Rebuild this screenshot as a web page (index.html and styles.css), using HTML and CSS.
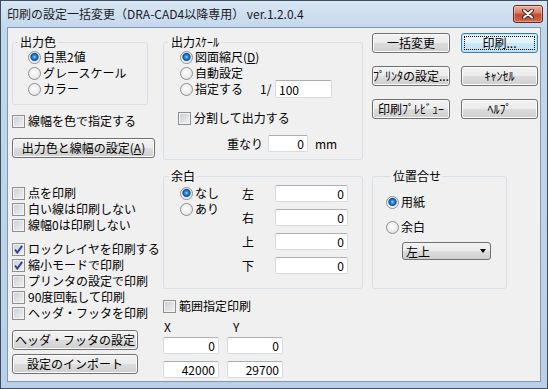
FILE: index.html
```html
<!DOCTYPE html>
<html>
<head>
    <title>印刷の設定一括変更</title>
    <link rel="stylesheet" href="styles.css">
</head>
<body>
<div class="window">
    <div class="titlebar">
        <span class="title">印刷の設定一括変更（DRA-CAD4以降専用） ver.1.2.0.4</span>
        <span class="close">
            <svg width="12" height="10" viewBox="0 0 12 10">
                <path d="M2 1.5 L10 8.5 M10 1.5 L2 8.5" stroke="#4a1710" stroke-width="4" stroke-linecap="round"/>
                <path d="M2 1.5 L10 8.5 M10 1.5 L2 8.5" stroke="#fff" stroke-width="2.2" stroke-linecap="round"/>
            </svg>
        </span>
    </div>
    <div class="client">
        <!-- left column -->
        <div class="col col-left">
            <fieldset class="group g-color">
                <legend>出力色</legend>
                <div class="opts">
                    <div class="opt"><span class="radio on"></span>白黒2値</div>
                    <div class="opt"><span class="radio"></span>グレースケール</div>
                    <div class="opt"><span class="radio"></span>カラー</div>
                </div>
            </fieldset>
            <div class="opt width-by-color"><span class="check"></span>線幅を色で指定する</div>
            <button class="btn btn-colorset">出力色と線幅の設定(<u>A</u>)</button>

            <div class="checks checks-1">
                <div class="opt"><span class="check"></span>点を印刷</div>
                <div class="opt"><span class="check"></span>白い線は印刷しない</div>
                <div class="opt"><span class="check"></span>線幅0は印刷しない</div>
            </div>
            <div class="checks checks-2">
                <div class="opt"><span class="check on"><svg width="11" height="11" viewBox="0 0 11 11"><path d="M2 5.5 L4.3 8.5 L9.2 1.8" fill="none" stroke="#2f4a92" stroke-width="2"/></svg></span>ロックレイヤを印刷する</div>
                <div class="opt"><span class="check on"><svg width="11" height="11" viewBox="0 0 11 11"><path d="M2 5.5 L4.3 8.5 L9.2 1.8" fill="none" stroke="#2f4a92" stroke-width="2"/></svg></span>縮小モードで印刷</div>
                <div class="opt"><span class="check"></span>プリンタの設定で印刷</div>
                <div class="opt"><span class="check"></span>90度回転して印刷</div>
                <div class="opt"><span class="check"></span>ヘッダ・フッタを印刷</div>
            </div>
            <button class="btn btn-header">ヘッダ・フッタの設定</button>
            <button class="btn btn-import">設定のインポート</button>
        </div>

        <!-- middle column -->
        <div class="col col-mid">
            <fieldset class="group g-scale">
                <legend>出力ｽｹｰﾙ</legend>
                <div class="opts">
                    <div class="opt"><span class="radio on"></span>図面縮尺(<u>D</u>)</div>
                    <div class="opt"><span class="radio"></span>自動設定</div>
                    <div class="opt">
                        <span class="radio"></span><span class="scale-label">指定する</span>
                        <span class="scale-of">1/</span>
                        <input class="field scale-val" value="100">
                    </div>
                </div>
                <div class="opt split"><span class="check"></span>分割して出力する</div>
                <div class="overlap">
                    <span class="overlap-label">重なり</span>
                    <input class="field num overlap-val" value="0">
                    <span class="unit">mm</span>
                </div>
            </fieldset>

            <fieldset class="group g-margin">
                <legend>余白</legend>
                <div class="margin-body">
                    <div class="margin-opts">
                        <div class="opt"><span class="radio on"></span>なし</div>
                        <div class="opt"><span class="radio"></span>あり</div>
                    </div>
                    <div class="margin-fields">
                        <div class="mrow"><span class="mlabel">左</span><input class="field num mval" value="0"></div>
                        <div class="mrow"><span class="mlabel">右</span><input class="field num mval" value="0"></div>
                        <div class="mrow"><span class="mlabel">上</span><input class="field num mval" value="0"></div>
                        <div class="mrow"><span class="mlabel">下</span><input class="field num mval" value="0"></div>
                    </div>
                </div>
            </fieldset>

            <div class="opt range"><span class="check"></span>範囲指定印刷</div>
            <div class="xy-labels"><span class="xy-x">X</span><span>Y</span></div>
            <div class="xy-row xy-row-1">
                <input class="field num xy" value="0">
                <input class="field num xy" value="0">
            </div>
            <div class="xy-row xy-row-2">
                <input class="field num xy" value="42000">
                <input class="field num xy" value="29700">
            </div>
        </div>

        <!-- right column -->
        <div class="col col-right">
            <div class="actions">
                <button class="btn">一括変更</button>
                <button class="btn btn-default">印刷...</button>
                <button class="btn">ﾌﾟﾘﾝﾀの設定...</button>
                <button class="btn">ｷｬﾝｾﾙ</button>
                <button class="btn">印刷ﾌﾟﾚﾋﾞｭｰ</button>
                <button class="btn">ﾍﾙﾌﾟ</button>
            </div>

            <fieldset class="group g-align">
                <legend>位置合せ</legend>
                <div class="opt align-paper"><span class="radio on"></span>用紙</div>
                <div class="opt align-margin"><span class="radio"></span>余白</div>
                <div class="combo"><span>左上</span><span class="arrow"></span></div>
            </fieldset>
        </div>
    </div>
</div>
</body>
</html>
```

FILE: styles.css
```css
* {
    box-sizing: border-box;
}

body {
    margin: 0;
    font-family: "Noto Sans CJK JP", sans-serif;
    font-size: 12px;
    color: #000;
}

.window {
    width: 548px;
    height: 389px;
    border: 1px solid #3e4e61;
    padding: 0 6px 6px;
    background: linear-gradient(#d9e6f4, #c3d7ec 27px, #bad0e8);
    display: flex;
    flex-direction: column;
}

.titlebar {
    height: 26px;
    margin: 0 -6px;
    padding: 0 4px 0 6px;
    display: flex;
    align-items: center;
    justify-content: space-between;
}

.title {
    line-height: 14px;
    color: #1b1b1b;
}

.close {
    width: 30px;
    height: 18px;
    border: 1px solid #6b2a1d;
    border-radius: 3px;
    background: linear-gradient(#eab0a0, #d77b63 45%, #c4472c 50%, #cf6a50);
    box-shadow: inset 0 0 0 1px rgba(255, 255, 255, 0.35);
    display: flex;
    align-items: center;
    justify-content: center;
}

.client {
    flex: 1;
    background: #f0f0f0;
    border: 1px solid #7d97b4;
    display: flex;
    padding-left: 4px;
}

.col {
    display: flex;
    flex-direction: column;
    align-items: flex-start;
}

.col-left {
    width: 143px;
    margin-right: 8px;
}

.col-mid {
    width: 200px;
    margin-right: 9px;
}

.col-right {
    width: 166px;
}

/* group boxes */
.group {
    margin: 0;
    padding: 0;
    border: 1px solid #d5dfe5;
    border-radius: 3px;
    min-width: 0;
}

.group legend {
    margin-left: 5px;
    padding: 0 2px;
    height: 14px;
    line-height: 14px;
}

/* radio / check rows */
.opt {
    display: flex;
    align-items: center;
    height: 16px;
    line-height: 16px;
    white-space: nowrap;
}

.radio {
    flex: none;
    width: 13px;
    height: 13px;
    margin-right: 2px;
    border: 1px solid #8e8f8f;
    border-radius: 50%;
    background: radial-gradient(circle at 45% 40%, #ffffff 0, #ececec 55%, #d4d4d4 100%);
}

.radio.on {
    background: radial-gradient(circle at 50% 45%, #9ee0ff 0, #2f92e6 1.5px, #0b4f9e 3.5px, #5b8fc6 4px, #e8e8e8 4.6px, #fafafa 6px);
}

.check {
    flex: none;
    width: 13px;
    height: 13px;
    margin-right: 3px;
    border: 1px solid #8e8f8f;
    background: linear-gradient(135deg, #c9ccd2, #f4f4f4);
    box-shadow: inset 0 0 0 1px #f3f3f3;
    display: flex;
    align-items: center;
    justify-content: center;
}

/* buttons */
.btn {
    height: 20px;
    padding: 0;
    font: inherit;
    line-height: 14px;
    color: #000;
    border: 1px solid #707070;
    border-radius: 3px;
    background: linear-gradient(#f2f2f2, #ebebeb 49%, #dddddd 50%, #cfcfcf);
    box-shadow: inset 0 0 0 1px #fcfcfc;
    white-space: nowrap;
}

.btn-default {
    border-color: #3c7fb1;
    background: linear-gradient(#eef8fd, #e0f2fc 49%, #cde9f9 50%, #bde1f5);
    box-shadow: inset 0 0 0 1px #b9e4f8;
    outline: 1px dotted #000;
    outline-offset: -4px;
}

/* inputs */
.field {
    height: 17px;
    padding: 0 3px;
    font: inherit;
    line-height: 15px;
    color: #000;
    background: #fff;
    border: 1px solid #d6dbe2;
    border-top-color: #abadb3;
    border-radius: 2px;
}

.num {
    text-align: right;
}

/* left column */
.g-color {
    width: 136px;
    margin-top: 7px;
}

.g-color .opts {
    padding: 0 0 7px 15px;
}

.width-by-color {
    margin-top: 8px;
}

.btn-colorset {
    width: 143px;
    margin-top: 9px;
}

.checks-1 {
    margin-top: 27px;
}

.checks-2 {
    margin-top: 8px;
}

.btn-header {
    width: 126px;
    margin-top: 9px;
}

.btn-import {
    width: 126px;
    margin-top: 4px;
}

/* middle column */
.g-scale {
    width: 200px;
    margin-top: 7px;
    padding-bottom: 7px;
}

.g-scale .opts {
    padding-left: 16px;
}

.scale-label {
    width: 65px;
}

.scale-of {
    width: 15px;
}

.scale-val {
    width: 57px;
    height: 18px;
}

.split {
    margin-top: 13px;
    padding-left: 14px;
}

.overlap {
    display: flex;
    align-items: center;
    height: 18px;
    margin-top: 8px;
    padding-left: 63px;
}

.overlap-label {
    width: 41px;
}

.overlap-val {
    width: 40px;
}

.unit {
    margin-left: 7px;
}

.g-margin {
    width: 200px;
    margin-top: 9px;
    padding-bottom: 14px;
}

.margin-body {
    display: flex;
    padding-top: 2px;
}

.margin-opts {
    width: 78px;
    padding-left: 16px;
}

.margin-fields {
    display: flex;
    flex-direction: column;
    gap: 7px;
}

.mrow {
    display: flex;
    align-items: center;
}

.mlabel {
    width: 33px;
}

.mval {
    width: 73px;
}

.range {
    margin-top: 9px;
}

.xy-labels {
    display: flex;
    height: 14px;
    line-height: 14px;
    margin-top: 6px;
    padding-left: 1px;
}

.xy-x {
    width: 69px;
}

.xy-row {
    display: flex;
    gap: 8px;
}

.xy-row-1 {
    margin-top: 3px;
}

.xy-row-2 {
    margin-top: 7px;
}

.xy {
    width: 56px;
}

/* right column */
.actions {
    display: grid;
    grid-template-columns: 78px 77px;
    column-gap: 11px;
    row-gap: 13px;
    margin-top: 5px;
}

.g-align {
    width: 135px;
    margin-top: 50px;
    padding: 0 0 28px 13px;
}

.align-paper {
    margin-top: 11px;
}

.align-margin {
    margin-top: 9px;
}

.combo {
    width: 89px;
    height: 18px;
    margin-top: 7px;
    margin-left: 16px;
    padding: 0 4px 0 3px;
    display: flex;
    align-items: center;
    justify-content: space-between;
    border: 1px solid #707070;
    border-radius: 3px;
    background: linear-gradient(#f2f2f2, #ebebeb 49%, #dddddd 50%, #cfcfcf);
}

.arrow {
    width: 0;
    height: 0;
    border-left: 3.5px solid transparent;
    border-right: 3.5px solid transparent;
    border-top: 4px solid #000;
}
```
